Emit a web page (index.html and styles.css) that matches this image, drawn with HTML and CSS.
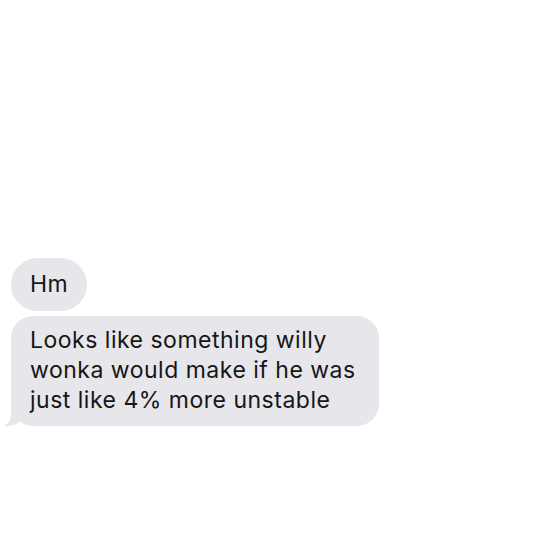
FILE: index.html
```html
<!DOCTYPE html>
<html lang="en">
<head>
    <meta charset="UTF-8">
    <meta name="viewport" content="width=device-width, initial-scale=1.0">
    <title>Messages</title>
    <link rel="stylesheet" href="styles.css">
</head>
<body>
    <div class="thread">
        <div class="bubble">Hm</div>
        <div class="bubble bubble-last">Looks like something willy wonka would make if he was just like 4% more unstable</div>
    </div>
</body>
</html>
```

FILE: styles.css
```css
body {
    margin: 0;
    background: #ffffff;
    font-family: Inter, "Liberation Sans", Arial, sans-serif;
    color: #161616;
}
.thread {
    display: flex;
    flex-direction: column;
    align-items: flex-start;
    gap: 5px;
    padding: 258px 0 0 11px;
}
.bubble {
    position: relative;
    background: #e6e6eb;
    font-size: 23px;
    letter-spacing: 0.5px;
    line-height: 30px;
    padding: 11px 19px 12px;
    border-radius: 27px;
}
.bubble-last {
    max-width: 329px;
    padding: 9px 20px 11px 19px;
    border-radius: 22px;
}
/* tail */
.bubble-last::before {
    content: "";
    position: absolute;
    left: -7px;
    bottom: 0;
    width: 20px;
    height: 20px;
    background: #e6e6eb;
    border-bottom-right-radius: 15px;
}
.bubble-last::after {
    content: "";
    position: absolute;
    left: -10px;
    bottom: 0;
    width: 10px;
    height: 20px;
    background: #ffffff;
    border-bottom-right-radius: 10px;
}
```
